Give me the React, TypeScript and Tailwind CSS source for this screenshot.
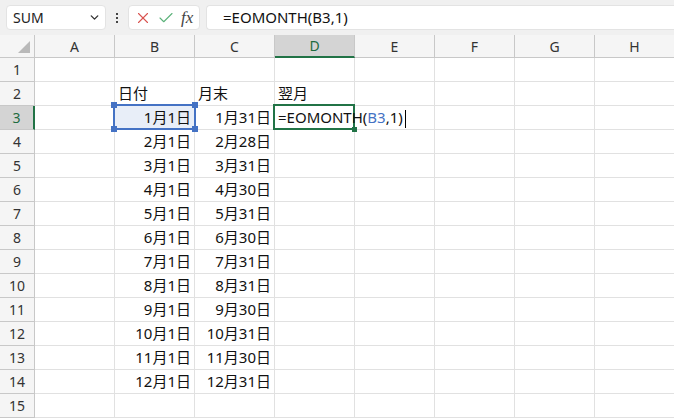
import { ChevronDown, X, Check } from "lucide-react";

const cols = ["A", "B", "C", "D", "E", "F", "G", "H"];

const dates = [
  ["1月1日", "1月31日"],
  ["2月1日", "2月28日"],
  ["3月1日", "3月31日"],
  ["4月1日", "4月30日"],
  ["5月1日", "5月31日"],
  ["6月1日", "6月30日"],
  ["7月1日", "7月31日"],
  ["8月1日", "8月31日"],
  ["9月1日", "9月30日"],
  ["10月1日", "10月31日"],
  ["11月1日", "11月30日"],
  ["12月1日", "12月31日"],
];

const cellFont = "font-['Noto_Sans','Noto_Sans_CJK_JP',sans-serif]";

function Cell({ row, col }: { row: number; col: number }) {
  let content: React.ReactNode = null;
  let align = "justify-start";

  if (row === 2 && col === 1) content = "日付";
  if (row === 2 && col === 2) content = "月末";
  if (row === 2 && col === 3) content = "翌月";
  if (row >= 3 && row <= 14 && (col === 1 || col === 2)) {
    content = dates[row - 3][col - 1];
    align = "justify-end";
  }
  if (row === 3 && col === 3) {
    content = (
      <span className="relative z-20 whitespace-nowrap">
        =EOMONTH(<span className="text-[#4472c4]">B3</span>,1)
        <span className="inline-block w-px h-[18px] bg-black align-middle ml-[2px]" />
      </span>
    );
  }
  const isB3 = row === 3 && col === 1;

  return (
    <div
      className={`relative w-[80px] h-[24px] shrink-0 border-r border-b border-[#e1e1e1] flex items-center px-[3px] text-[15px] text-[#111] ${align} ${
        isB3 ? "bg-[#e8eef8]" : ""
      }`}
    >
      {content}
      {isB3 && (
        <div className="absolute left-[-2px] top-[-2px] right-[-2px] bottom-[-1px] border-2 border-[#4472c4] z-10">
          <span className="absolute -left-[4px] -top-[4px] w-[6px] h-[6px] bg-[#4472c4]" />
          <span className="absolute -right-[4px] -top-[4px] w-[6px] h-[6px] bg-[#4472c4]" />
          <span className="absolute -left-[4px] -bottom-[4px] w-[6px] h-[6px] bg-[#4472c4]" />
          <span className="absolute -right-[4px] -bottom-[4px] w-[6px] h-[6px] bg-[#4472c4]" />
        </div>
      )}
      {row === 3 && col === 3 && (
        <div className="absolute left-[-2px] top-[-2px] right-[-1px] bottom-[-1px] border-2 border-[#217346] z-10">
          <span className="absolute -right-[4px] -bottom-[4px] w-[5px] h-[5px] bg-[#217346]" />
        </div>
      )}
    </div>
  );
}

export default function App() {
  return (
    <div className={`w-[674px] h-[419px] overflow-hidden bg-white ${cellFont}`}>
      {/* Formula bar */}
      <div className="h-[35px] bg-[#f0f0f0] flex items-center gap-[6px] pl-[6px]">
        <div className="w-[100px] h-[25px] bg-white rounded-[4px] border border-[#e3e3e3] flex items-center justify-between pl-[6px] pr-[4px]">
          <span className="text-[14px] text-[#222]">SUM</span>
          <ChevronDown className="w-[13px] h-[13px] text-[#333]" strokeWidth={2.5} />
        </div>
        <div className="w-[10px] flex flex-col items-center gap-[2px]">
          <span className="w-[2px] h-[2px] bg-[#444]" />
          <span className="w-[2px] h-[2px] bg-[#444]" />
          <span className="w-[2px] h-[2px] bg-[#444]" />
        </div>
        <div className="w-[72px] h-[25px] bg-white rounded-[4px] border border-[#e3e3e3] flex items-center justify-around pl-[2px] pr-[3px]">
          <X className="w-[18px] h-[18px] text-[#d9534f]" strokeWidth={1.5} />
          <Check className="w-[18px] h-[18px] text-[#5cb27a]" strokeWidth={1.5} />
          <span className="font-['Liberation_Serif',serif] italic text-[17px] text-[#444] leading-none">
            fx
          </span>
        </div>
        <div className="flex-1 h-[25px] bg-white rounded-l-[4px] border border-r-0 border-[#e3e3e3] flex items-center pl-[16px] text-[15px] text-[#111]">
          =EOMONTH(B3,1)
        </div>
      </div>

      {/* Column headers */}
      <div className="flex h-[23px] bg-[#f5f5f5]">
        <div className="w-[35px] h-[23px] shrink-0 border-r border-b border-[#c8c8c8] relative">
          <svg className="absolute right-[4px] bottom-[4px]" width="12" height="12" viewBox="0 0 12 12">
            <polygon points="12,0 12,12 0,12" fill="#b9b9b9" />
          </svg>
        </div>
        {cols.map((c) => (
          <div
            key={c}
            className={`w-[80px] h-[23px] shrink-0 flex items-center justify-center text-[14px] border-r ${
              c === "D"
                ? "bg-[#d4d4d4] text-[#1e6b3f] border-b-2 border-b-[#217346] border-r-[#c8c8c8]"
                : "text-[#333] border-b border-[#c8c8c8]"
            }`}
          >
            {c}
          </div>
        ))}
      </div>

      {/* Rows */}
      {Array.from({ length: 15 }, (_, i) => i + 1).map((r) => (
        <div key={r} className="flex">
          <div
            className={`w-[35px] h-[24px] shrink-0 flex items-center justify-center text-[14px] border-b ${
              r === 3
                ? "bg-[#d4d4d4] text-[#1e6b3f] border-r-2 border-r-[#217346] border-b-[#c8c8c8]"
                : "bg-[#f5f5f5] text-[#333] border-r border-[#c8c8c8]"
            }`}
          >
            {r}
          </div>
          {cols.map((c, ci) => (
            <Cell key={c} row={r} col={ci} />
          ))}
        </div>
      ))}
    </div>
  );
}
